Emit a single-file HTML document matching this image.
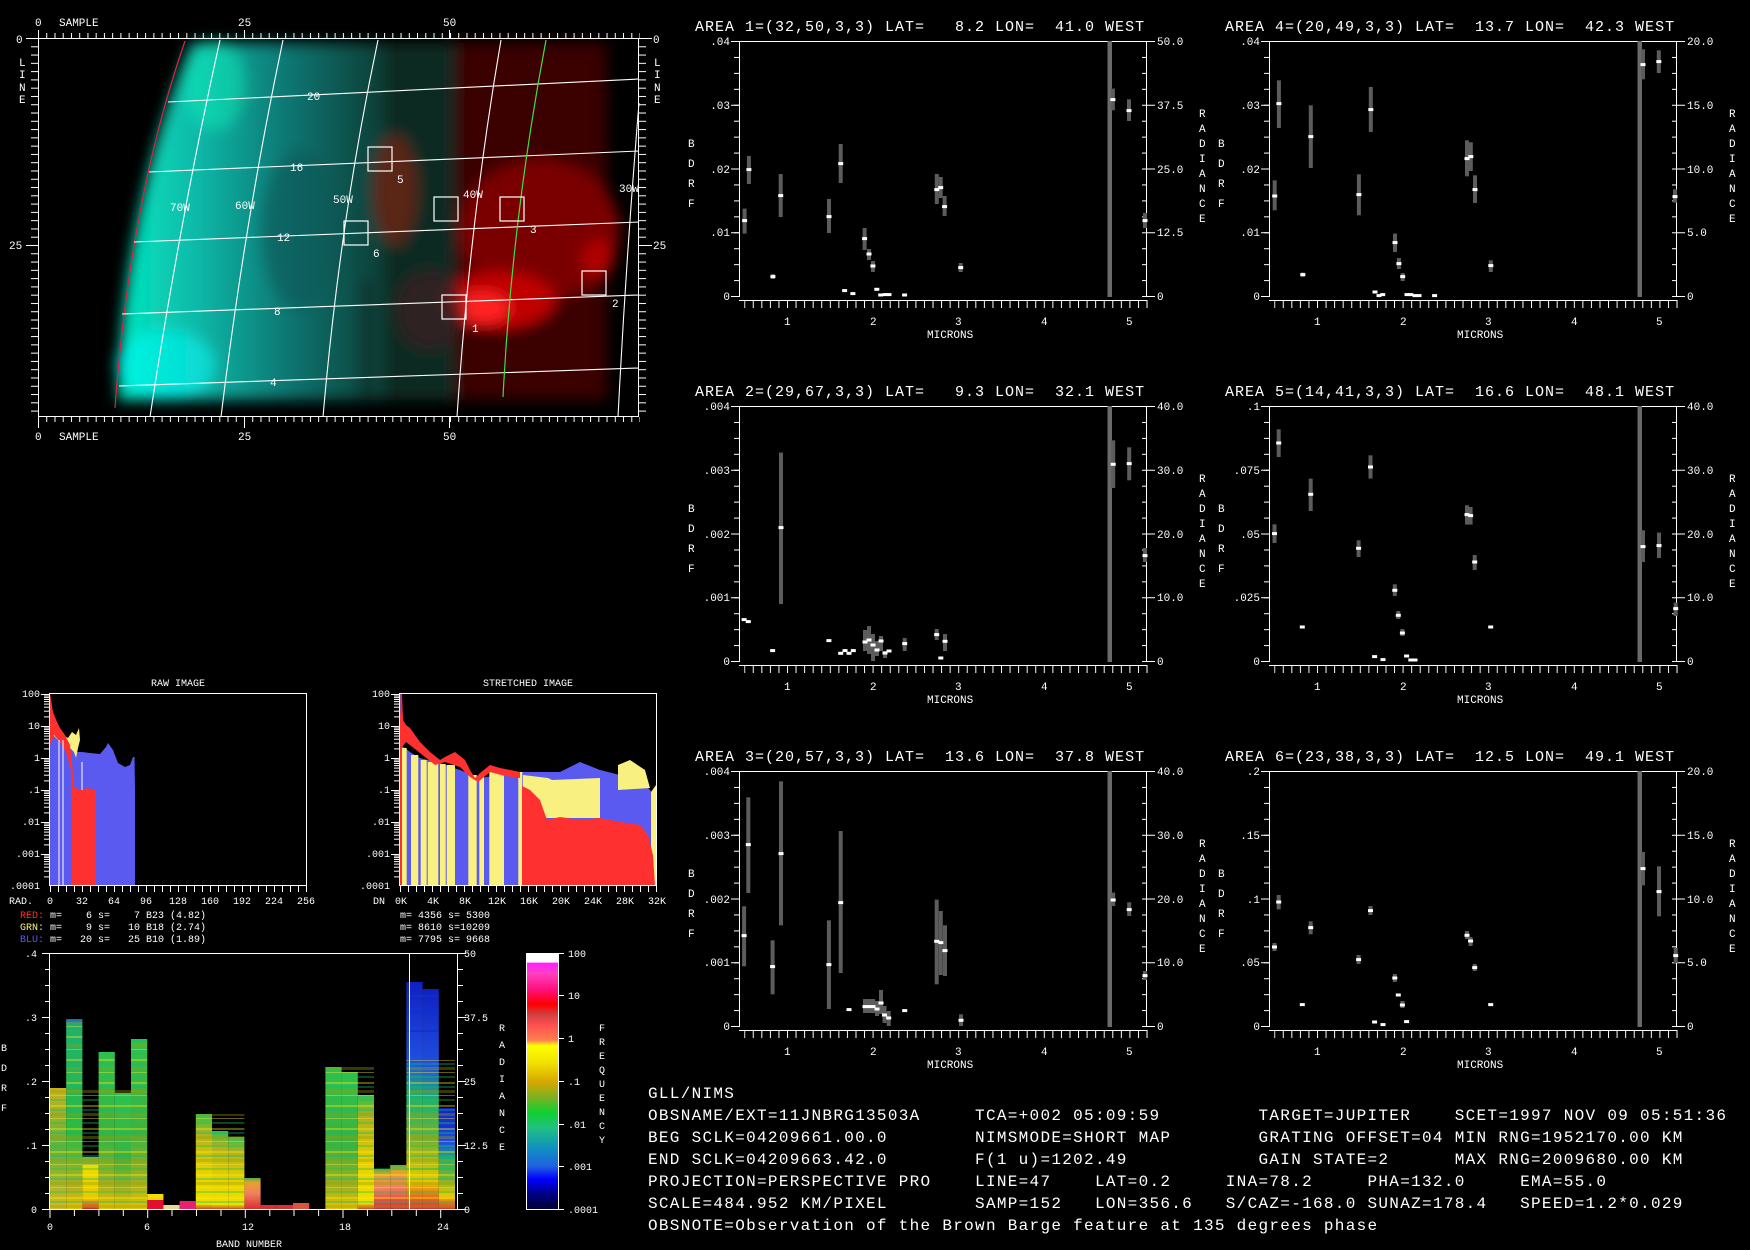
<!DOCTYPE html>
<html><head><meta charset="utf-8"><style>
html,body{margin:0;padding:0;background:#000;width:1750px;height:1250px;overflow:hidden}
svg{position:absolute;left:0;top:0}
.t{font-family:"Liberation Mono",monospace;fill:#fff;white-space:pre}
#info{position:absolute;left:648px;top:1083px;margin:0;font-family:"Liberation Mono",monospace;font-size:16px;letter-spacing:1.3px;line-height:22px;color:#fff;white-space:pre}
</style></head><body>
<svg width="1750" height="1250" viewBox="0 0 1750 1250" xmlns="http://www.w3.org/2000/svg">
<defs>
<filter id="bl" x="-10%" y="-10%" width="120%" height="120%"><feGaussianBlur stdDeviation="7"/></filter>
<linearGradient id="cy" x1="0" y1="0" x2="1" y2="0">
<stop offset="0" stop-color="#00e8c0"/><stop offset=".3" stop-color="#10b8a8"/><stop offset=".65" stop-color="#0e7470"/><stop offset="1" stop-color="#0a3c34"/></linearGradient>
<pattern id="pv16" width="10" height="15.94" patternUnits="userSpaceOnUse"><rect width="10" height="1" fill="#fff"/></pattern>
<pattern id="ph" width="8.56" height="10" x="5.2" patternUnits="userSpaceOnUse"><rect width="1" height="10" fill="#fff"/></pattern>
<pattern id="mt" width="8.24" height="10" x="38" patternUnits="userSpaceOnUse"><rect width="1" height="10" fill="#fff"/></pattern>
<pattern id="ml" width="10" height="8.28" y="38" patternUnits="userSpaceOnUse"><rect width="10" height="1" fill="#fff"/></pattern>
<pattern id="bt" width="10" height="16" y="953" patternUnits="userSpaceOnUse"><rect width="10" height="1" fill="#fff"/></pattern>
<pattern id="ht" width="8" height="10" x="50" patternUnits="userSpaceOnUse"><rect width="1" height="10" fill="#fff"/></pattern>
<pattern id="ht2" width="8" height="10" x="400" patternUnits="userSpaceOnUse"><rect width="1" height="10" fill="#fff"/></pattern>
<pattern id="st" width="20" height="23" patternUnits="userSpaceOnUse">
<rect y="1" width="20" height="2" fill="rgba(255,240,0,.45)"/><rect y="5" width="20" height="2" fill="rgba(0,190,130,.45)"/><rect y="9" width="20" height="3" fill="rgba(150,160,0,.45)"/><rect y="14" width="20" height="1" fill="rgba(255,230,60,.5)"/><rect y="18" width="20" height="2" fill="rgba(20,200,70,.45)"/></pattern>
<linearGradient id="gG" x1="0" y1="0" x2="0" y2="1"><stop offset="0" stop-color="#30c050"/><stop offset=".55" stop-color="#40b040"/><stop offset=".85" stop-color="#a8b020"/><stop offset="1" stop-color="#e8c000"/></linearGradient>
<linearGradient id="g1" x1="0" y1="0" x2="0" y2="1"><stop offset="0" stop-color="#2060e0"/><stop offset=".03" stop-color="#20b070"/><stop offset=".6" stop-color="#30b840"/><stop offset=".9" stop-color="#b8b020"/><stop offset="1" stop-color="#e8c000"/></linearGradient>
<linearGradient id="g0" x1="0" y1="0" x2="0" y2="1"><stop offset="0" stop-color="#c8b020"/><stop offset=".5" stop-color="#60b040"/><stop offset="1" stop-color="#d8b820"/></linearGradient>
<linearGradient id="gY" x1="0" y1="0" x2="0" y2="1"><stop offset="0" stop-color="#f0e000"/><stop offset=".8" stop-color="#e8c800"/><stop offset=".93" stop-color="#e06020"/><stop offset="1" stop-color="#e02020"/></linearGradient>
<linearGradient id="gYG" x1="0" y1="0" x2="0" y2="1"><stop offset="0" stop-color="#30c050"/><stop offset=".2" stop-color="#b0b020"/><stop offset=".6" stop-color="#e8d000"/><stop offset=".95" stop-color="#f0e000"/><stop offset="1" stop-color="#e04020"/></linearGradient>
<linearGradient id="gS" x1="0" y1="0" x2="0" y2="1"><stop offset="0" stop-color="#50b040"/><stop offset=".15" stop-color="#e8a030"/><stop offset=".5" stop-color="#f08060"/><stop offset="1" stop-color="#d83030"/></linearGradient>
<linearGradient id="gB" x1="0" y1="0" x2="0" y2="1"><stop offset="0" stop-color="#1020c0"/><stop offset=".35" stop-color="#2050e0"/><stop offset=".5" stop-color="#20b070"/><stop offset=".7" stop-color="#80b030"/><stop offset=".87" stop-color="#e8c800"/><stop offset="1" stop-color="#e03030"/></linearGradient>
<linearGradient id="gC" x1="0" y1="0" x2="0" y2="1">
<stop offset="0" stop-color="#fff"/><stop offset=".035" stop-color="#fff"/><stop offset=".04" stop-color="#ff20ff"/><stop offset=".08" stop-color="#ff40c0"/><stop offset=".14" stop-color="#ff1080"/><stop offset=".2" stop-color="#ff0000"/><stop offset=".24" stop-color="#d04040"/><stop offset=".28" stop-color="#ff5050"/><stop offset=".34" stop-color="#ff8050"/><stop offset=".36" stop-color="#ffff00"/><stop offset=".43" stop-color="#f0e000"/><stop offset=".5" stop-color="#d8a800"/><stop offset=".56" stop-color="#80b020"/><stop offset=".62" stop-color="#10d030"/><stop offset=".68" stop-color="#20c080"/><stop offset=".76" stop-color="#1090c0"/><stop offset=".83" stop-color="#2060e0"/><stop offset=".88" stop-color="#0000ff"/><stop offset=".94" stop-color="#000080"/><stop offset="1" stop-color="#000030"/></linearGradient>
<rect id="mk" x="-2.5" y="-1.5" width="5" height="3" fill="#fff"/>
<g id="ax">
<path d="M0,0.5H408M0.5,0V256M407.5,0V256M0,259.5H408M-8,0.5H0M-8,64.25H0M-8,128H0M-8,191.75H0M-8,255.5H0M408,0.5H416M408,64.25H416M408,128H416M408,191.75H416M408,255.5H416" stroke="#fff" fill="none"/>
<rect x="-5" y="0" width="5" height="256" fill="url(#pv16)"/>
<rect x="403" y="0" width="5" height="256" fill="url(#pv16)"/>
<rect x="5.2" y="259" width="404" height="8" fill="url(#ph)"/>
<rect x="368.5" y="0" width="4.5" height="256" fill="#6a6a6a"/>
</g>
<g id="logt" fill="#fff">
<rect x="-6" y="-9.6" width="6" height="1"/><rect x="-6" y="-15.3" width="6" height="1"/><rect x="-6" y="-19.3" width="6" height="1"/><rect x="-6" y="-22.4" width="6" height="1"/><rect x="-6" y="-24.9" width="6" height="1"/><rect x="-6" y="-27" width="6" height="1"/><rect x="-6" y="-28.9" width="6" height="1"/><rect x="-6" y="-30.5" width="6" height="1"/><rect x="-9" y="-32" width="9" height="1"/></g>
</defs>

<!-- ============ MAP ============ -->
<g filter="url(#bl)">
<path d="M192,43 L385,43 L385,400 L118,400 Q122,210 192,43Z" fill="url(#cy)"/>
<ellipse cx="165" cy="365" rx="50" ry="35" fill="#00ffff" opacity=".5"/>
<ellipse cx="215" cy="85" rx="30" ry="45" fill="#00ffc0" opacity=".4"/>
<ellipse cx="300" cy="230" rx="40" ry="80" fill="#0a5858" opacity=".6"/>
<rect x="385" y="43" width="70" height="357" fill="#0e2a22"/>
<rect x="455" y="43" width="152" height="357" fill="#3a0000"/>
<ellipse cx="540" cy="230" rx="80" ry="70" fill="#7a0000"/>
<ellipse cx="500" cy="300" rx="55" ry="28" fill="#c00000"/>
<ellipse cx="482" cy="308" rx="28" ry="16" fill="#ff2020"/>
<ellipse cx="598" cy="258" rx="16" ry="18" fill="#b00000"/>
<ellipse cx="395" cy="190" rx="22" ry="55" fill="#5a2818"/>
<ellipse cx="430" cy="310" rx="35" ry="40" fill="#3a2020" opacity=".7"/>
<rect x="363" y="280" width="5" height="120" fill="#050505"/>
</g>
<path d="M185,41 Q130,200 115,408" stroke="#e02040" stroke-width="1.2" fill="none"/>
<g stroke="#fff" stroke-width="1.1" fill="none">
<path d="M168,102 L639,79"/><path d="M149,172 L639,151"/><path d="M134,242 L639,222"/><path d="M122,314 L639,295"/><path d="M119,386 L639,368"/>
<path d="M220,40 Q180,220 150,417"/><path d="M283,40 Q245,220 221,417"/><path d="M378,40 Q340,220 323,417"/><path d="M501,40 Q470,220 457,417"/><path d="M639,103 Q626,260 618,417"/>
</g>
<path d="M546,40 Q512,220 503,397" stroke="#40e040" stroke-width="1.2" fill="none"/>
<g stroke="#fff" stroke-width="1.2" fill="none">
<rect x="368" y="147" width="24" height="24"/><rect x="434" y="197" width="24" height="24"/><rect x="500" y="197" width="24" height="24"/><rect x="344" y="221" width="24" height="24"/><rect x="582" y="271" width="24" height="24"/><rect x="442" y="295" width="24" height="24"/>
</g>
<g class="t" font-size="11">
<text x="307" y="100">20</text><text x="290" y="171">16</text><text x="277" y="241">12</text><text x="274" y="315">8</text><text x="270" y="386">4</text>
<text x="170" y="211">70W</text><text x="235" y="209">60W</text><text x="333" y="203">50W</text><text x="463" y="198">40W</text><text x="619" y="192">30W</text>
<text x="397" y="183">5</text><text x="530" y="233">3</text><text x="373" y="257">6</text><text x="612" y="307">2</text><text x="472" y="332">1</text>
</g>
<rect x="38.5" y="38.5" width="600" height="378" fill="none" stroke="#fff"/>
<rect x="38" y="33" width="602" height="5" fill="url(#mt)"/>
<rect x="38" y="417" width="602" height="5" fill="url(#mt)"/>
<rect x="31" y="38" width="7" height="380" fill="url(#ml)"/>
<rect x="639" y="38" width="7" height="380" fill="url(#ml)"/>
<path d="M38.5,30V38M244.5,30V38M449.5,30V38M38.5,417V428M244.5,417V428M449.5,417V428M26,38.5H38M26,245.5H38M639,38.5H652M639,245.5H652" stroke="#fff"/>
<g class="t" font-size="11">
<text x="35" y="26">0</text><text x="59" y="26">SAMPLE</text><text x="238" y="26">25</text><text x="443" y="26">50</text>
<text x="35" y="440">0</text><text x="59" y="440">SAMPLE</text><text x="238" y="440">25</text><text x="443" y="440">50</text>
<text x="16" y="43">0</text><text x="19" y="66">L</text><text x="19" y="78">I</text><text x="19" y="91">N</text><text x="19" y="103">E</text><text x="9" y="249">25</text>
<text x="653" y="43">0</text><text x="654" y="66">L</text><text x="654" y="78">I</text><text x="654" y="91">N</text><text x="654" y="103">E</text><text x="653" y="249">25</text>
</g>

<!-- ============ AREA PLOTS ============ -->
<g class="t" font-size="15" letter-spacing="1.0">
<text x="695" y="31">AREA 1=(32,50,3,3) LAT=&#160;&#160;&#160;8.2 LON=&#160;&#160;41.0 WEST</text>
<text x="1225" y="31">AREA 4=(20,49,3,3) LAT=&#160;&#160;13.7 LON=&#160;&#160;42.3 WEST</text>
<text x="695" y="396">AREA 2=(29,67,3,3) LAT=&#160;&#160;&#160;9.3 LON=&#160;&#160;32.1 WEST</text>
<text x="1225" y="396">AREA 5=(14,41,3,3) LAT=&#160;&#160;16.6 LON=&#160;&#160;48.1 WEST</text>
<text x="695" y="761">AREA 3=(20,57,3,3) LAT=&#160;&#160;13.6 LON=&#160;&#160;37.8 WEST</text>
<text x="1225" y="761">AREA 6=(23,38,3,3) LAT=&#160;&#160;12.5 LON=&#160;&#160;49.1 WEST</text>
</g>

<!-- Area 1 -->
<g transform="translate(739,41)">
<use href="#ax"/>
<g fill="#5c5c5c">
<rect x="3.6" y="167.6" width="4" height="25"/><rect x="7.9" y="115" width="4" height="28"/><rect x="31.9" y="233" width="4" height="5"/><rect x="39.7" y="133" width="4" height="43"/><rect x="88" y="158" width="4" height="34"/><rect x="99.7" y="103" width="4" height="39"/><rect x="123.6" y="187" width="4" height="22"/><rect x="128" y="208" width="4" height="11"/><rect x="131.9" y="220" width="4" height="11"/><rect x="195.8" y="133" width="4" height="30"/><rect x="199.7" y="136" width="4" height="21"/><rect x="203.6" y="155" width="4" height="20"/><rect x="219.7" y="222" width="4" height="9"/><rect x="371.9" y="47.6" width="4" height="21.7"/><rect x="388" y="58.3" width="4" height="21.7"/><rect x="404" y="172" width="4" height="15"/>
</g>
<use href="#mk" x="5.6" y="179.6"/><use href="#mk" x="9.9" y="128.6"/><use href="#mk" x="33.9" y="235.6"/><use href="#mk" x="41.7" y="154.6"/><use href="#mk" x="90" y="175.6"/><use href="#mk" x="101.7" y="122.6"/><use href="#mk" x="105.6" y="249.6"/><use href="#mk" x="113.9" y="252.6"/><use href="#mk" x="125.6" y="197.6"/><use href="#mk" x="130" y="213"/><use href="#mk" x="133.9" y="225"/><use href="#mk" x="137.8" y="248.3"/><use href="#mk" x="141.7" y="254"/><use href="#mk" x="146" y="253.6"/><use href="#mk" x="150" y="253.6"/><use href="#mk" x="165.6" y="254"/><use href="#mk" x="197.8" y="148.6"/><use href="#mk" x="201.7" y="146.6"/><use href="#mk" x="205.6" y="165.6"/><use href="#mk" x="221.7" y="226.6"/><use href="#mk" x="373.9" y="58.6"/><use href="#mk" x="390" y="69.6"/><use href="#mk" x="406" y="179.6"/>
<g class="t" font-size="11" text-anchor="end"><text x="-9" y="4">.04</text><text x="-9" y="68">.03</text><text x="-9" y="132">.02</text><text x="-9" y="195">.01</text><text x="-9" y="259">0</text></g>
<g class="t" font-size="11"><text x="418" y="4">50.0</text><text x="418" y="68">37.5</text><text x="418" y="132">25.0</text><text x="418" y="195">12.5</text><text x="418" y="259">0</text></g>
<g class="t" font-size="11"><text x="45" y="284">1</text><text x="131" y="284">2</text><text x="216" y="284">3</text><text x="302" y="284">4</text><text x="387" y="284">5</text><text x="188" y="297">MICRONS</text><text x="-51" y="106">B</text><text x="-51" y="126">D</text><text x="-51" y="146">R</text><text x="-51" y="166">F</text><text x="460" y="76">R</text><text x="460" y="91">A</text><text x="460" y="106">D</text><text x="460" y="121">I</text><text x="460" y="136">A</text><text x="460" y="151">N</text><text x="460" y="166">C</text><text x="460" y="181">E</text></g>
</g>
<!-- Area 4 -->
<g transform="translate(1269,41)">
<use href="#ax"/>
<g fill="#5c5c5c">
<rect x="3.7" y="139.3" width="4" height="30"/><rect x="7.9" y="39.3" width="4" height="47.7"/><rect x="31.8" y="231.6" width="4" height="4.4"/><rect x="39.8" y="64.3" width="4" height="62.7"/><rect x="87.9" y="133.3" width="4" height="41"/><rect x="99.8" y="46" width="4" height="45"/><rect x="124" y="192.6" width="4" height="18.4"/><rect x="127.9" y="217" width="4" height="11"/><rect x="131.7" y="232" width="4" height="8"/><rect x="196" y="99.3" width="4" height="36"/><rect x="199.8" y="101.3" width="4" height="28.7"/><rect x="204" y="134.3" width="4" height="27.7"/><rect x="219.8" y="219.3" width="4" height="11.7"/><rect x="372" y="8.3" width="4" height="30"/><rect x="387.8" y="9.3" width="4" height="22.7"/><rect x="404" y="148.3" width="4" height="13.3"/>
</g>
<use href="#mk" x="5.7" y="155"/><use href="#mk" x="9.9" y="62.6"/><use href="#mk" x="33.8" y="233.6"/><use href="#mk" x="41.8" y="95.6"/><use href="#mk" x="89.9" y="153.6"/><use href="#mk" x="101.8" y="68.6"/><use href="#mk" x="106" y="251"/><use href="#mk" x="110" y="254.6"/><use href="#mk" x="113.7" y="253.6"/><use href="#mk" x="126" y="201.6"/><use href="#mk" x="129.9" y="222.6"/><use href="#mk" x="133.7" y="235.6"/><use href="#mk" x="138" y="253.6"/><use href="#mk" x="141.8" y="253.6"/><use href="#mk" x="146" y="254.6"/><use href="#mk" x="150" y="254.6"/><use href="#mk" x="165.6" y="254.6"/><use href="#mk" x="198" y="117.6"/><use href="#mk" x="201.8" y="115.6"/><use href="#mk" x="206" y="148.6"/><use href="#mk" x="221.8" y="224.6"/><use href="#mk" x="374" y="23.6"/><use href="#mk" x="389.8" y="20.6"/><use href="#mk" x="406" y="155.6"/>
<g class="t" font-size="11" text-anchor="end"><text x="-9" y="4">.04</text><text x="-9" y="68">.03</text><text x="-9" y="132">.02</text><text x="-9" y="195">.01</text><text x="-9" y="259">0</text></g>
<g class="t" font-size="11"><text x="418" y="4">20.0</text><text x="418" y="68">15.0</text><text x="418" y="132">10.0</text><text x="418" y="195">5.0</text><text x="418" y="259">0</text></g>
<g class="t" font-size="11"><text x="45" y="284">1</text><text x="131" y="284">2</text><text x="216" y="284">3</text><text x="302" y="284">4</text><text x="387" y="284">5</text><text x="188" y="297">MICRONS</text><text x="-51" y="106">B</text><text x="-51" y="126">D</text><text x="-51" y="146">R</text><text x="-51" y="166">F</text><text x="460" y="76">R</text><text x="460" y="91">A</text><text x="460" y="106">D</text><text x="460" y="121">I</text><text x="460" y="136">A</text><text x="460" y="151">N</text><text x="460" y="166">C</text><text x="460" y="181">E</text></g>
</g>
<!-- Area 2 -->
<g transform="translate(739,406)">
<use href="#ax"/>
<g fill="#5c5c5c">
<rect x="40" y="46.6" width="4" height="151.4"/><rect x="124" y="224" width="4" height="21"/><rect x="128" y="220" width="4" height="28"/><rect x="132" y="228" width="4" height="27"/><rect x="136" y="235" width="4" height="15"/><rect x="140" y="230" width="4" height="15"/><rect x="144" y="245" width="4" height="7"/><rect x="163.7" y="232" width="4" height="13"/><rect x="195.7" y="223" width="4" height="11"/><rect x="204" y="228" width="4" height="17"/><rect x="372.2" y="34.3" width="4" height="47.7"/><rect x="388.2" y="41.3" width="4" height="33"/><rect x="404" y="142" width="4" height="14"/>
</g>
<use href="#mk" x="5.1" y="213.6"/><use href="#mk" x="9.3" y="215.6"/><use href="#mk" x="33.6" y="244.6"/><use href="#mk" x="42" y="121.6"/><use href="#mk" x="89.9" y="234.6"/><use href="#mk" x="101.7" y="247.3"/><use href="#mk" x="106" y="244.6"/><use href="#mk" x="110" y="247.3"/><use href="#mk" x="114.3" y="244.6"/><use href="#mk" x="126" y="236"/><use href="#mk" x="130" y="234"/><use href="#mk" x="134" y="239"/><use href="#mk" x="138" y="244"/><use href="#mk" x="142" y="235"/><use href="#mk" x="146" y="247"/><use href="#mk" x="150" y="245"/><use href="#mk" x="165.7" y="237.6"/><use href="#mk" x="197.7" y="228.6"/><use href="#mk" x="201.8" y="252"/><use href="#mk" x="206" y="235.3"/><use href="#mk" x="374.2" y="58.3"/><use href="#mk" x="390.2" y="57.6"/><use href="#mk" x="406" y="149.6"/>
<g class="t" font-size="11" text-anchor="end"><text x="-9" y="4">.004</text><text x="-9" y="68">.003</text><text x="-9" y="132">.002</text><text x="-9" y="195">.001</text><text x="-9" y="259">0</text></g>
<g class="t" font-size="11"><text x="418" y="4">40.0</text><text x="418" y="68">30.0</text><text x="418" y="132">20.0</text><text x="418" y="195">10.0</text><text x="418" y="259">0</text></g>
<g class="t" font-size="11"><text x="45" y="284">1</text><text x="131" y="284">2</text><text x="216" y="284">3</text><text x="302" y="284">4</text><text x="387" y="284">5</text><text x="188" y="297">MICRONS</text><text x="-51" y="106">B</text><text x="-51" y="126">D</text><text x="-51" y="146">R</text><text x="-51" y="166">F</text><text x="460" y="76">R</text><text x="460" y="91">A</text><text x="460" y="106">D</text><text x="460" y="121">I</text><text x="460" y="136">A</text><text x="460" y="151">N</text><text x="460" y="166">C</text><text x="460" y="181">E</text></g>
</g>
<!-- Area 5 -->
<g transform="translate(1269,406)">
<use href="#ax"/>
<g fill="#5c5c5c">
<rect x="3.5" y="118.3" width="4" height="18.7"/><rect x="7.7" y="23.3" width="4" height="27.7"/><rect x="39.7" y="72.6" width="4" height="32.4"/><rect x="87.6" y="134.3" width="4" height="16.7"/><rect x="99.5" y="49.3" width="4" height="23.3"/><rect x="123.8" y="178.3" width="4" height="11.7"/><rect x="127.3" y="205" width="4" height="8"/><rect x="131.4" y="223" width="4" height="7"/><rect x="196" y="99.3" width="4" height="19.3"/><rect x="199.6" y="101" width="4" height="17.6"/><rect x="203.7" y="149" width="4" height="15"/><rect x="372" y="124.3" width="4" height="31.7"/><rect x="388" y="126.6" width="4" height="25.4"/><rect x="404.7" y="196.6" width="4" height="13.4"/>
</g>
<use href="#mk" x="5.5" y="127.6"/><use href="#mk" x="9.7" y="37"/><use href="#mk" x="33.3" y="221"/><use href="#mk" x="41.7" y="88.3"/><use href="#mk" x="89.6" y="142.3"/><use href="#mk" x="101.5" y="61"/><use href="#mk" x="105.6" y="250.6"/><use href="#mk" x="114" y="253.6"/><use href="#mk" x="125.8" y="184.3"/><use href="#mk" x="129.3" y="209.3"/><use href="#mk" x="133.4" y="227"/><use href="#mk" x="137.6" y="250"/><use href="#mk" x="141.8" y="254"/><use href="#mk" x="146" y="254"/><use href="#mk" x="198" y="108.6"/><use href="#mk" x="201.6" y="109.6"/><use href="#mk" x="205.7" y="156"/><use href="#mk" x="221.7" y="221"/><use href="#mk" x="374" y="140.6"/><use href="#mk" x="390" y="139.6"/><use href="#mk" x="406.7" y="202.6"/>
<g class="t" font-size="11" text-anchor="end"><text x="-9" y="4">.1</text><text x="-9" y="68">.075</text><text x="-9" y="132">.05</text><text x="-9" y="195">.025</text><text x="-9" y="259">0</text></g>
<g class="t" font-size="11"><text x="418" y="4">40.0</text><text x="418" y="68">30.0</text><text x="418" y="132">20.0</text><text x="418" y="195">10.0</text><text x="418" y="259">0</text></g>
<g class="t" font-size="11"><text x="45" y="284">1</text><text x="131" y="284">2</text><text x="216" y="284">3</text><text x="302" y="284">4</text><text x="387" y="284">5</text><text x="188" y="297">MICRONS</text><text x="-51" y="106">B</text><text x="-51" y="126">D</text><text x="-51" y="146">R</text><text x="-51" y="166">F</text><text x="460" y="76">R</text><text x="460" y="91">A</text><text x="460" y="106">D</text><text x="460" y="121">I</text><text x="460" y="136">A</text><text x="460" y="151">N</text><text x="460" y="166">C</text><text x="460" y="181">E</text></g>
</g>
<!-- Area 3 -->
<g transform="translate(739,771)">
<use href="#ax"/>
<g fill="#5c5c5c">
<rect x="3.1" y="135.3" width="4" height="60"/><rect x="7.3" y="26.3" width="4" height="95.7"/><rect x="31.6" y="169.3" width="4" height="54"/><rect x="40" y="10.3" width="4" height="144"/><rect x="87.9" y="149.3" width="4" height="88.7"/><rect x="99.7" y="60" width="4" height="142"/><rect x="124" y="228" width="4" height="14"/><rect x="128" y="228" width="4" height="14"/><rect x="132" y="228" width="4" height="14"/><rect x="136" y="230" width="4" height="15"/><rect x="140" y="219" width="4" height="24"/><rect x="143.5" y="235" width="4" height="17"/><rect x="147.7" y="240" width="4" height="15"/><rect x="195.7" y="128.6" width="4" height="84.7"/><rect x="199.8" y="140" width="4" height="64"/><rect x="204" y="154.3" width="4" height="50.7"/><rect x="220" y="243.3" width="4" height="11.7"/><rect x="372.2" y="121.6" width="4" height="13.4"/><rect x="388.2" y="131.3" width="4" height="13.7"/><rect x="404" y="200" width="4" height="9"/>
</g>
<use href="#mk" x="5.1" y="164.6"/><use href="#mk" x="9.3" y="73.6"/><use href="#mk" x="33.6" y="195.6"/><use href="#mk" x="42" y="82.6"/><use href="#mk" x="89.9" y="193.6"/><use href="#mk" x="101.7" y="131.6"/><use href="#mk" x="110" y="238.6"/><use href="#mk" x="126" y="235.6"/><use href="#mk" x="130" y="235.6"/><use href="#mk" x="134" y="235.6"/><use href="#mk" x="138" y="238"/><use href="#mk" x="142" y="232"/><use href="#mk" x="145.5" y="244"/><use href="#mk" x="149.7" y="247"/><use href="#mk" x="165.7" y="239.6"/><use href="#mk" x="197.7" y="170.3"/><use href="#mk" x="201.8" y="171.6"/><use href="#mk" x="206" y="179.6"/><use href="#mk" x="222" y="249.3"/><use href="#mk" x="374.2" y="129"/><use href="#mk" x="390.2" y="138.6"/><use href="#mk" x="406" y="204.6"/>
<g class="t" font-size="11" text-anchor="end"><text x="-9" y="4">.004</text><text x="-9" y="68">.003</text><text x="-9" y="132">.002</text><text x="-9" y="195">.001</text><text x="-9" y="259">0</text></g>
<g class="t" font-size="11"><text x="418" y="4">40.0</text><text x="418" y="68">30.0</text><text x="418" y="132">20.0</text><text x="418" y="195">10.0</text><text x="418" y="259">0</text></g>
<g class="t" font-size="11"><text x="45" y="284">1</text><text x="131" y="284">2</text><text x="216" y="284">3</text><text x="302" y="284">4</text><text x="387" y="284">5</text><text x="188" y="297">MICRONS</text><text x="-51" y="106">B</text><text x="-51" y="126">D</text><text x="-51" y="146">R</text><text x="-51" y="166">F</text><text x="460" y="76">R</text><text x="460" y="91">A</text><text x="460" y="106">D</text><text x="460" y="121">I</text><text x="460" y="136">A</text><text x="460" y="151">N</text><text x="460" y="166">C</text><text x="460" y="181">E</text></g>
</g>
<!-- Area 6 -->
<g transform="translate(1269,771)">
<use href="#ax"/>
<g fill="#5c5c5c">
<rect x="3.5" y="172" width="4" height="8"/><rect x="7.7" y="124" width="4" height="14.3"/><rect x="39.7" y="150.3" width="4" height="13"/><rect x="87.6" y="184" width="4" height="9"/><rect x="99.5" y="135" width="4" height="9"/><rect x="123.8" y="203" width="4" height="8"/><rect x="131.4" y="230" width="4" height="7"/><rect x="196" y="160" width="4" height="8"/><rect x="199.6" y="166" width="4" height="9"/><rect x="203.7" y="193" width="4" height="7"/><rect x="372" y="81" width="4" height="33.3"/><rect x="388" y="95.3" width="4" height="50"/><rect x="404.7" y="177" width="4" height="15"/>
</g>
<use href="#mk" x="5.5" y="176"/><use href="#mk" x="9.7" y="131"/><use href="#mk" x="33.3" y="233.6"/><use href="#mk" x="41.7" y="156.6"/><use href="#mk" x="89.6" y="188.6"/><use href="#mk" x="101.5" y="139.6"/><use href="#mk" x="105.6" y="251"/><use href="#mk" x="114" y="253.6"/><use href="#mk" x="125.8" y="207"/><use href="#mk" x="129.3" y="224"/><use href="#mk" x="133.4" y="234"/><use href="#mk" x="137.6" y="250.6"/><use href="#mk" x="198" y="164.3"/><use href="#mk" x="201.6" y="170"/><use href="#mk" x="205.7" y="196.6"/><use href="#mk" x="221.7" y="233.6"/><use href="#mk" x="374" y="97.6"/><use href="#mk" x="390" y="120.6"/><use href="#mk" x="406.7" y="184.6"/>
<g class="t" font-size="11" text-anchor="end"><text x="-9" y="4">.2</text><text x="-9" y="68">.15</text><text x="-9" y="132">.1</text><text x="-9" y="195">.05</text><text x="-9" y="259">0</text></g>
<g class="t" font-size="11"><text x="418" y="4">20.0</text><text x="418" y="68">15.0</text><text x="418" y="132">10.0</text><text x="418" y="195">5.0</text><text x="418" y="259">0</text></g>
<g class="t" font-size="11"><text x="45" y="284">1</text><text x="131" y="284">2</text><text x="216" y="284">3</text><text x="302" y="284">4</text><text x="387" y="284">5</text><text x="188" y="297">MICRONS</text><text x="-51" y="106">B</text><text x="-51" y="126">D</text><text x="-51" y="146">R</text><text x="-51" y="166">F</text><text x="460" y="76">R</text><text x="460" y="91">A</text><text x="460" y="106">D</text><text x="460" y="121">I</text><text x="460" y="136">A</text><text x="460" y="151">N</text><text x="460" y="166">C</text><text x="460" y="181">E</text></g>
</g>

<!-- ============ HISTOGRAMS ============ -->
<g class="t" font-size="10" text-anchor="middle"><text x="178" y="686">RAW IMAGE</text><text x="528" y="686">STRETCHED IMAGE</text></g>
<polygon fill="#5a5af0" points="50,700 53,736 60,740 70,745 76,752 82,752 90,753 100,754 106,747 108,743 113,750 118,763 125,767 130,765 133,757 134.5,757 135,790 135,886 50,886"/>
<polygon fill="#f8f080" points="52,718 56,722 60,730 63,735 68,738 72,732 76,735 79,728 80,740 78,748 76,758 74,752 70,748 65,745 60,742 55,737 52,735"/>
<polygon fill="#ff3030" points="50,693 53,712 57,722 60,728 65,735 70,745 72,762 74,787 80,790 88,788 93,790 96,790 96,886 72,886 71,770 66,752 60,742 54,735 50,745"/>
<g fill="#fff"><rect x="58.5" y="740" width="1" height="146"/><rect x="62.5" y="740" width="1" height="146"/><rect x="81.5" y="762" width="1" height="28"/></g>
<polygon fill="#5a5af0" points="401,745 410,752 420,758 440,763 460,770 480,778 500,775 520,772 540,772 560,772 580,762 600,770 620,775 640,780 650,790 656,800 656,886 401,886"/>
<g fill="#f8f080">
<rect x="401.7" y="748" width="5" height="138"/><rect x="411" y="755" width="7.3" height="131"/><rect x="420.7" y="760" width="6" height="126"/><rect x="427.7" y="762" width="10.6" height="124"/><rect x="440" y="764" width="5.7" height="122"/><rect x="446.7" y="765" width="8.3" height="121"/><rect x="468.3" y="775" width="8.4" height="111"/><rect x="479.3" y="776" width="4.7" height="110"/><rect x="489.3" y="772" width="14.7" height="114"/><rect x="518.3" y="772" width="4" height="114"/>
<polygon points="523,775 548,778 552,780 600,778 600,818 523,818"/>
<polygon points="618,765 630,760 645,770 650,788 618,790"/>
<polygon points="651,792 656,785 656,886 651,886"/>
</g>
<polygon fill="#ff3030" points="400,693 402,693 403,720 406,725 410,728 420,742 430,752 440,760 445,757 455,752 465,760 470,770 475,778 480,773 490,765 500,768 510,770 520,772 520,778 505,776 490,772 478,782 470,777 460,767 445,762 435,765 425,757 415,749 406,742 402,747 402,886 400,886"/>
<polygon fill="#ff3030" points="522,786 530,790 540,800 547,820 560,817 580,820 600,818 620,822 640,825 648,835 653,855 655,886 522,886"/>
<rect x="400" y="693" width="2" height="20" fill="#a04090"/>
<g stroke="#fff" fill="none"><rect x="49.5" y="693.5" width="257" height="192"/><rect x="399.5" y="693.5" width="257" height="192"/></g>
<use href="#logt" x="50" y="886"/><use href="#logt" x="50" y="854"/><use href="#logt" x="50" y="822"/><use href="#logt" x="50" y="790"/><use href="#logt" x="50" y="758"/><use href="#logt" x="50" y="726"/>
<use href="#logt" x="400" y="886"/><use href="#logt" x="400" y="854"/><use href="#logt" x="400" y="822"/><use href="#logt" x="400" y="790"/><use href="#logt" x="400" y="758"/><use href="#logt" x="400" y="726"/>
<rect x="50" y="886" width="258" height="6" fill="url(#ht)"/><rect x="400" y="886" width="258" height="6" fill="url(#ht2)"/>
<g class="t" font-size="10" text-anchor="end">
<text x="40" y="697">100</text><text x="40" y="729">10</text><text x="40" y="761">1</text><text x="40" y="793">.1</text><text x="40" y="825">.01</text><text x="40" y="857">.001</text><text x="40" y="889">.0001</text>
<text x="390" y="697">100</text><text x="390" y="729">10</text><text x="390" y="761">1</text><text x="390" y="793">.1</text><text x="390" y="825">.01</text><text x="390" y="857">.001</text><text x="390" y="889">.0001</text>
</g>
<g class="t" font-size="10">
<text x="9" y="904">RAD.</text><text x="47" y="904">0</text><text x="76" y="904">32</text><text x="108" y="904">64</text><text x="140" y="904">96</text><text x="169" y="904">128</text><text x="201" y="904">160</text><text x="233" y="904">192</text><text x="265" y="904">224</text><text x="297" y="904">256</text>
<text x="373" y="904">DN</text><text x="395" y="904">0K</text><text x="427" y="904">4K</text><text x="459" y="904">8K</text><text x="488" y="904">12K</text><text x="520" y="904">16K</text><text x="552" y="904">20K</text><text x="584" y="904">24K</text><text x="616" y="904">28K</text><text x="648" y="904">32K</text>
<text x="20" y="918"><tspan fill="#ff3030">RED:</tspan>&#160;m=&#160;&#160;&#160;&#160;6&#160;s=&#160;&#160;&#160;&#160;7&#160;B23&#160;(4.82)</text>
<text x="20" y="930"><tspan fill="#f8f080">GRN:</tspan>&#160;m=&#160;&#160;&#160;&#160;9&#160;s=&#160;&#160;&#160;10&#160;B18&#160;(2.74)</text>
<text x="20" y="942"><tspan fill="#5a5af0">BLU:</tspan>&#160;m=&#160;&#160;&#160;20&#160;s=&#160;&#160;&#160;25&#160;B10&#160;(1.89)</text>
<text x="400" y="918">m=&#160;4356&#160;s=&#160;5300</text><text x="400" y="930">m=&#160;8610&#160;s=10209</text><text x="400" y="942">m=&#160;7795&#160;s=&#160;9668</text>
</g>

<!-- ============ BAND PLOT ============ -->
<g>
<rect x="50" y="1088" width="16.2" height="121" fill="url(#g0)"/>
<rect x="66.2" y="1019" width="16.2" height="190" fill="url(#g1)"/>
<rect x="82.4" y="1157" width="16.2" height="52" fill="url(#gY)"/>
<rect x="82.4" y="1157" width="16.2" height="8" fill="#80b030"/>
<rect x="98.6" y="1052" width="16.2" height="157" fill="url(#gG)"/>
<rect x="114.8" y="1093" width="16.2" height="116" fill="url(#gG)"/>
<rect x="131" y="1039" width="16.2" height="170" fill="url(#gG)"/>
<rect x="147.2" y="1194" width="16.2" height="15" fill="url(#gY)"/>
<rect x="147.2" y="1200" width="16.2" height="9" fill="#e01030"/>
<rect x="163.4" y="1205" width="16.2" height="4" fill="#e8d890"/>
<rect x="179.6" y="1201" width="16.2" height="8" fill="#e82070"/>
<rect x="195.8" y="1114" width="16.2" height="95" fill="url(#gYG)"/>
<rect x="212" y="1131" width="16.2" height="78" fill="url(#gYG)"/>
<rect x="228.2" y="1137" width="16.2" height="72" fill="url(#gYG)"/>
<rect x="244.4" y="1178" width="16.2" height="31" fill="url(#gS)"/>
<rect x="260.6" y="1205" width="16.2" height="4" fill="#d83030"/>
<rect x="276.8" y="1205" width="16.2" height="4" fill="#d83030"/>
<rect x="293" y="1203" width="16.2" height="6" fill="#e05040"/>
<rect x="325.4" y="1067" width="16.2" height="142" fill="url(#gG)"/>
<rect x="341.6" y="1072" width="16.2" height="137" fill="url(#gG)"/>
<rect x="357.8" y="1095" width="16.2" height="114" fill="url(#gYG)"/>
<rect x="374" y="1169" width="16.2" height="40" fill="url(#gS)"/>
<rect x="390.2" y="1165" width="16.2" height="44" fill="url(#gS)"/>
<rect x="406.4" y="982" width="16.2" height="227" fill="url(#gB)"/>
<rect x="422.6" y="989" width="16.2" height="220" fill="url(#gB)"/>
<rect x="438.8" y="1108" width="16.2" height="101" fill="url(#gB)"/>
</g>
<g fill="url(#st)" opacity=".8">
<rect x="50" y="1088" width="97.2" height="121"/><rect x="66.2" y="1022" width="16.2" height="70"/><rect x="98.6" y="1052" width="16.2" height="40"/><rect x="131" y="1039" width="16.2" height="55"/>
<rect x="195.8" y="1114" width="48.6" height="95"/><rect x="325.4" y="1067" width="48.6" height="142"/><rect x="374" y="1165" width="81" height="44"/><rect x="406.4" y="1060" width="48.6" height="110"/>
</g>
<g fill="#1030d0" opacity=".8"><rect x="406.4" y="995" width="32.4" height="2"/><rect x="406.4" y="1010" width="32.4" height="3"/><rect x="406.4" y="1030" width="32.4" height="2"/><rect x="438.8" y="1125" width="16.2" height="3"/></g>
<path d="M409.5,953V1209" stroke="#fff"/>
<path d="M49.5,953V1210M457.5,953V1210M49.5,953.5H458M49.5,1209.5H458M42,953.5H50M42,1017.5H50M42,1081.5H50M42,1145.5H50M42,1209.5H50M458,953.5H466M458,1017.5H466M458,1081.5H466M458,1145.5H466M458,1209.5H466" stroke="#fff" fill="none"/>
<rect x="45" y="953" width="5" height="258" fill="url(#bt)"/><rect x="458" y="953" width="5" height="258" fill="url(#bt)"/>
<g fill="#fff"><rect x="49.5" y="1210" width="1" height="8"/><rect x="73.9" y="1210" width="1" height="6"/><rect x="98.4" y="1210" width="1" height="6"/><rect x="122.8" y="1210" width="1" height="6"/><rect x="147.2" y="1210" width="1" height="8"/><rect x="171.5" y="1210" width="1" height="6"/><rect x="196" y="1210" width="1" height="6"/><rect x="220.5" y="1210" width="1" height="6"/><rect x="244.8" y="1210" width="1" height="8"/><rect x="269.3" y="1210" width="1" height="6"/><rect x="293.5" y="1210" width="1" height="6"/><rect x="318.1" y="1210" width="1" height="6"/><rect x="342.5" y="1210" width="1" height="8"/><rect x="366.9" y="1210" width="1" height="6"/><rect x="391.3" y="1210" width="1" height="6"/><rect x="415.8" y="1210" width="1" height="6"/><rect x="440.2" y="1210" width="1" height="8"/></g>
<g class="t" font-size="10">
<text x="25" y="957">.4</text><text x="25" y="1021">.3</text><text x="25" y="1085">.2</text><text x="25" y="1149">.1</text><text x="31" y="1213">0</text>
<text x="464" y="957">50</text><text x="464" y="1021">37.5</text><text x="464" y="1085">25</text><text x="464" y="1149">12.5</text><text x="464" y="1213">0</text>
<text x="1" y="1051">B</text><text x="1" y="1071">D</text><text x="1" y="1091">R</text><text x="1" y="1111">F</text>
<text x="499" y="1031">R</text><text x="499" y="1048">A</text><text x="499" y="1065">D</text><text x="499" y="1082">I</text><text x="499" y="1099">A</text><text x="499" y="1116">N</text><text x="499" y="1133">C</text><text x="499" y="1150">E</text>
<text x="47" y="1230">0</text><text x="144" y="1230">6</text><text x="242" y="1230">12</text><text x="339" y="1230">18</text><text x="437" y="1230">24</text>
<text x="216" y="1247">BAND NUMBER</text>
</g>
<rect x="527" y="953" width="31" height="257" fill="url(#gC)"/>
<rect x="526.5" y="953.5" width="32" height="256" fill="none" stroke="#fff"/>
<path d="M558,953.5H564M558,995.5H564M558,1038.5H564M558,1081.5H564M558,1124.5H564M558,1166.5H564M558,1209.5H564" stroke="#fff"/>
<g class="t" font-size="10">
<text x="568" y="957">100</text><text x="568" y="999">10</text><text x="568" y="1042">1</text><text x="568" y="1085">.1</text><text x="568" y="1128">.01</text><text x="568" y="1170">.001</text><text x="568" y="1213">.0001</text>
<text x="599" y="1031">F</text><text x="599" y="1045">R</text><text x="599" y="1059">E</text><text x="599" y="1073">Q</text><text x="599" y="1087">U</text><text x="599" y="1101">E</text><text x="599" y="1115">N</text><text x="599" y="1129">C</text><text x="599" y="1143">Y</text>
</g>
</svg>
<pre id="info">GLL/NIMS
OBSNAME/EXT=11JNBRG13503A     TCA=+002 05:09:59         TARGET=JUPITER    SCET=1997 NOV 09 05:51:36
BEG SCLK=04209661.00.0        NIMSMODE=SHORT MAP        GRATING OFFSET=04 MIN RNG=1952170.00 KM
END SCLK=04209663.42.0        F(1 u)=1202.49            GAIN STATE=2      MAX RNG=2009680.00 KM
PROJECTION=PERSPECTIVE PRO    LINE=47    LAT=0.2     INA=78.2     PHA=132.0     EMA=55.0
SCALE=484.952 KM/PIXEL        SAMP=152   LON=356.6   S/CAZ=-168.0 SUNAZ=178.4   SPEED=1.2*0.029
OBSNOTE=Observation of the Brown Barge feature at 135 degrees phase</pre>
</body></html>
